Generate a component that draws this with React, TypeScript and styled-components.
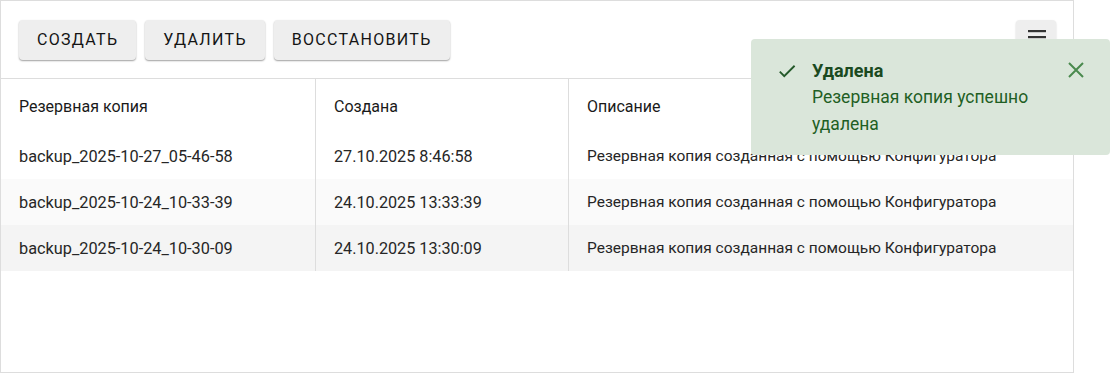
import React from "react";
import styled, { createGlobalStyle } from "styled-components";

const GlobalStyle = createGlobalStyle`
  html, body {
    margin: 0;
    padding: 0;
    background: #ffffff;
    font-family: Roboto, "Noto Sans", sans-serif;
  }
`;

const Page = styled.div`
  position: relative;
  width: 1114px;
  height: 374px;
  overflow: hidden;
`;

const Panel = styled.div`
  width: 1074px;
  height: 373px;
  box-sizing: border-box;
  border: 1px solid #dddddd;
  display: flex;
  flex-direction: column;
`;

const Toolbar = styled.div`
  display: flex;
  align-items: center;
  gap: 9px;
  height: 78px;
  padding: 0 17px 0 18px;
  border-bottom: 1px solid #dddddd;
  box-sizing: border-box;
`;

const Button = styled.button`
  height: 40px;
  padding: 0 18px;
  border: none;
  border-radius: 4px;
  background: #eeeeee;
  box-shadow: 0 1px 2px rgba(0, 0, 0, 0.28), 0 1px 1px rgba(0, 0, 0, 0.12);
  font-family: Roboto, sans-serif;
  font-size: 16px;
  font-weight: 400;
  letter-spacing: 1.3px;
  text-transform: uppercase;
  color: #141414;
  cursor: pointer;
`;

const Spacer = styled.div`
  flex: 1;
`;

const MenuButton = styled.button`
  width: 40px;
  height: 40px;
  border: none;
  border-radius: 4px;
  background: #eeeeee;
  box-shadow: 0 1px 2px rgba(0, 0, 0, 0.2);
  display: flex;
  align-items: flex-start;
  justify-content: center;
  padding: 10px 0 0 1px;
`;

const Table = styled.div`
  display: grid;
  grid-template-columns: 314px 253px 1fr;
`;

const HeadCell = styled.div<{ $divider?: boolean }>`
  height: 54px;
  display: flex;
  align-items: center;
  padding: 0 18px;
  font-size: 16px;
  font-weight: 400;
  color: #1a1a1a;
  border-left: ${({ $divider }) => ($divider ? "1px solid #dddddd" : "none")};
`;

const Cell = styled.div<{ $divider?: boolean; $bg: string; $size: number }>`
  height: 46px;
  display: flex;
  align-items: center;
  padding: 0 18px;
  font-size: ${({ $size }) => $size}px;
  color: #262626;
  background: ${({ $bg }) => $bg};
  border-left: ${({ $divider }) => ($divider ? "1px solid #dddddd" : "none")};
  white-space: nowrap;
`;

const Toast = styled.div`
  position: absolute;
  left: 751px;
  top: 39px;
  width: 359px;
  height: 116px;
  box-sizing: border-box;
  border-radius: 4px;
  background: #dae6da;
  display: flex;
  padding: 18px 26px 0 25px;
  gap: 14px;
`;

const ToastIcon = styled.div`
  padding-top: 3px;
`;

const ToastBody = styled.div`
  flex: 1;
  color: #1f5f24;
  font-size: 17.5px;
  line-height: 27px;
`;

const ToastTitle = styled.div`
  font-size: 18px;
  font-weight: 700;
  color: #1b4a1f;
`;

const CloseButton = styled.button`
  border: none;
  background: none;
  padding: 5px 0 0 0;
  height: 24px;
  cursor: pointer;
`;

const rows = [
  ["backup_2025-10-27_05-46-58", "27.10.2025 8:46:58", "Резервная копия созданная с помощью Конфигуратора"],
  ["backup_2025-10-24_10-33-39", "24.10.2025 13:33:39", "Резервная копия созданная с помощью Конфигуратора"],
  ["backup_2025-10-24_10-30-09", "24.10.2025 13:30:09", "Резервная копия созданная с помощью Конфигуратора"],
];

const rowBg = ["#ffffff", "#fafafa", "#f4f4f4"];
const colSize = [16.3, 16.2, 15.5];

export default function App() {
  return (
    <Page>
      <GlobalStyle />
      <Panel>
        <Toolbar>
          <Button>Создать</Button>
          <Button>Удалить</Button>
          <Button>Восстановить</Button>
          <Spacer />
          <MenuButton>
            <svg width="18" height="14" viewBox="0 0 18 14">
              <rect x="0" y="0" width="18" height="2.2" fill="#333" />
              <rect x="0" y="6" width="18" height="2.2" fill="#333" />
              <rect x="0" y="12" width="18" height="2.2" fill="#333" />
            </svg>
          </MenuButton>
        </Toolbar>
        <Table>
          <HeadCell>Резервная копия</HeadCell>
          <HeadCell $divider>Создана</HeadCell>
          <HeadCell $divider>Описание</HeadCell>
          {rows.map((r, i) =>
            r.map((v, j) => (
              <Cell key={`${i}-${j}`} $divider={j > 0} $bg={rowBg[i]} $size={colSize[j]}>
                {v}
              </Cell>
            ))
          )}
        </Table>
      </Panel>
      <Toast>
        <ToastIcon>
          <svg width="22" height="22" viewBox="0 0 24 24">
            <path d="M9 16.17 4.83 12l-1.42 1.41L9 19 21 7l-1.41-1.41z" fill="#24592a" />
          </svg>
        </ToastIcon>
        <ToastBody>
          <ToastTitle>Удалена</ToastTitle>
          Резервная копия успешно удалена
        </ToastBody>
        <CloseButton>
          <svg width="16" height="16" viewBox="0 0 16 16">
            <path d="M1 1 L15 15 M15 1 L1 15" stroke="#4a8a4e" strokeWidth="2" />
          </svg>
        </CloseButton>
      </Toast>
    </Page>
  );
}
